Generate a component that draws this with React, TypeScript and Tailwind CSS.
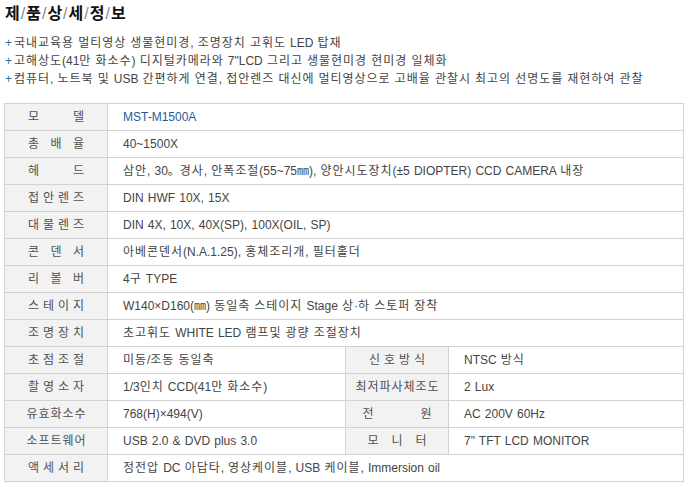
import React from "react";

type Cell = { label: string; value: string; lw?: number; blue?: boolean };
type Row = Cell | [Cell, Cell];

const rows: Row[] = [
  { label: "모델", value: "MST-M1500A", blue: true },
  { label: "총배율", value: "40~1500X" },
  { label: "헤드", value: "삼안, 30。경사, 안폭조절(55~75㎜), 양안시도장치(±5 DIOPTER) CCD CAMERA 내장" },
  { label: "접안렌즈", value: "DIN HWF 10X, 15X" },
  { label: "대물렌즈", value: "DIN 4X, 10X, 40X(SP), 100X(OIL, SP)" },
  { label: "콘덴서", value: "아베콘덴서(N.A.1.25), 홍체조리개, 필터홀더" },
  { label: "리볼버", value: "4구 TYPE" },
  { label: "스테이지", value: "W140×D160(㎜) 동일축 스테이지 Stage 상·하 스토퍼 장착" },
  { label: "조명장치", value: "초고휘도 WHITE LED 램프및 광량 조절장치" },
  [
    { label: "초점조절", value: "미동/조동 동일축" },
    { label: "신호방식", value: "NTSC 방식" },
  ],
  [
    { label: "촬영소자", value: "1/3인치 CCD(41만 화소수)" },
    { label: "최저파사체조도", value: "2 Lux" },
  ],
  [
    { label: "유효화소수", value: "768(H)×494(V)" },
    { label: "전원", value: "AC 200V 60Hz", lw: 70 },
  ],
  [
    { label: "소프트웨어", value: "USB 2.0 & DVD plus 3.0" },
    { label: "모니터", value: '7" TFT LCD MONITOR', lw: 60 },
  ],
  { label: "액세서리", value: "정전압 DC 아답타, 영상케이블, USB 케이블, Immersion oil" },
];

// Hangul runs get a little extra tracking so each syllable takes 12px, as in the reference
function K({ text }: { text: string }) {
  const parts = text.split(/([\uAC00-\uD7A3]+)/);
  return (
    <>
      {parts.map((p, i) =>
        i % 2 === 1 ? (
          <span key={i} className="tracking-[0.96px]">
            {p}
          </span>
        ) : (
          <React.Fragment key={i}>{p}</React.Fragment>
        )
      )}
    </>
  );
}

function Label({ text, w = 57 }: { text: string; w?: number }) {
  return (
    <div className="w-[102px] h-full shrink-0 bg-[#f2f2f2] flex items-center justify-center text-[#505050]">
      <div className="inline-flex justify-between" style={{ minWidth: w }}>
        {Array.from(text).map((c, i) => (
          <span key={i} className="inline-block w-[12px] text-center">
            {c}
          </span>
        ))}
      </div>
    </div>
  );
}

function Value({ cell, w }: { cell: Cell; w?: string }) {
  return (
    <div
      className={`h-full flex items-center pl-[15px] whitespace-nowrap ${w ?? "flex-1"} ${
        cell.blue ? "text-[#1f5c99]" : "text-[#444]"
      }`}
    >
      <span>
        <K text={cell.value} />
      </span>
    </div>
  );
}

const title = ["제", "품", "상", "세", "정", "보"];
const bullets = [
  "국내교육용 멀티영상 생물현미경, 조명장치 고휘도 LED 탑재",
  '고해상도(41만 화소수) 디지털카메라와 7"LCD 그리고 생물현미경 현미경 일체화',
  "컴퓨터, 노트북 및 USB 간편하게 연결, 접안렌즈 대신에 멀티영상으로 고배율 관찰시 최고의 선명도를 재현하여 관찰",
];

export default function App() {
  return (
    <div
      className="w-[689px] h-[487px] bg-white overflow-hidden text-[12px] text-[#444] [word-spacing:0.8px]"
      style={{ fontFamily: '"Liberation Sans", "Noto Sans CJK KR", sans-serif' }}
    >
      <div className="pl-[5px] pt-[3px] pb-[9px] leading-[22px] text-[16px] font-bold text-[#111]">
        {title.map((c, i) => (
          <React.Fragment key={i}>
            {i > 0 && <span className="font-normal text-[#888] mx-[1px]">/</span>}
            <span>{c}</span>
          </React.Fragment>
        ))}
      </div>
      <ul className="pl-[5px] leading-[18px]">
        {bullets.map((b, i) => (
          <li key={i} className="flex whitespace-nowrap">
            <span className="text-[#2f6fae] w-[9px]">+</span>
            <span>
              <K text={b} />
            </span>
          </li>
        ))}
      </ul>
      <div className="ml-[4px] mt-[15px] w-[680px] border border-[#d2d2d2] border-b-0">
        {rows.map((r, i) => (
          <div key={i} className="flex h-[27px] border-b border-[#d2d2d2]">
            {Array.isArray(r) ? (
              <>
                <div className="border-r border-[#d2d2d2] h-full">
                  <Label text={r[0].label} w={r[0].lw} />
                </div>
                <div className="w-[238px] h-full border-r border-[#d2d2d2]">
                  <Value cell={r[0]} w="w-full" />
                </div>
                <div className="border-r border-[#d2d2d2] h-full">
                  <Label text={r[1].label} w={r[1].lw} />
                </div>
                <Value cell={r[1]} />
              </>
            ) : (
              <>
                <div className="border-r border-[#d2d2d2] h-full">
                  <Label text={r.label} w={r.lw} />
                </div>
                <Value cell={r} />
              </>
            )}
          </div>
        ))}
      </div>
    </div>
  );
}
